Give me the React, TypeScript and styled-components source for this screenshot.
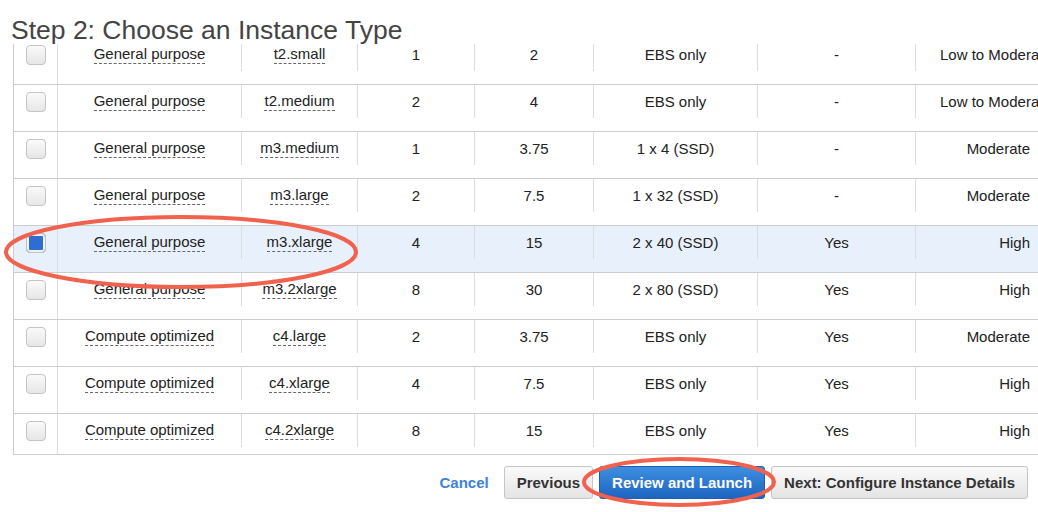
import React from "react";
import styled, { createGlobalStyle } from "styled-components";

const G = createGlobalStyle`
  body { margin:0; background:#fff; font-family:"Liberation Sans", Arial, sans-serif; }
`;
const Page = styled.div`position:relative;width:1038px;height:512px;overflow:hidden;`;
const Title = styled.h2`margin:0;height:44px;padding-left:11px;font-size:26.5px;font-weight:400;color:#444;line-height:60px;position:relative;z-index:1;`;
const TableWrap = styled.div`margin-left:13px;height:410px;overflow:hidden;border-bottom:1px solid #ccc;`;
const Table = styled.div`margin-top:-6px;width:1060px;`;
const Row = styled.div<{ sel?: boolean }>`
  display:grid;grid-template-columns:44px 184px 116px 117px 119px 164px 158px 158px;
  height:46px;border-bottom:1px solid #ccc;border-left:1px solid #ccc;background:${p => p.sel ? "#e8f0fb" : "#fff"};
`;
const Cell = styled.div<{ a?: string }>`
  display:flex;align-items:center;justify-content:${p => p.a || "center"};border-right:1px solid #ddd;
  font-size:15px;color:#222;padding:0 10px;white-space:nowrap;overflow:hidden;
`;
const Dash = styled.span`border-bottom:1px dashed #666;line-height:18px;`;
const Box = styled.span<{ on?: boolean }>`
  width:18px;height:18px;border-radius:4px;border:1px solid #c4c4c4;
  background:${p => p.on ? "#2c6fcf" : "linear-gradient(#fafafa,#e6e6e6)"};
  box-shadow:${p => p.on ? "inset 0 0 0 2px #f0f0f0" : "none"};
`;
const Footer = styled.div`display:flex;align-items:center;justify-content:flex-end;gap:6px;padding:11px 10px 0 0;`;
const Cancel = styled.span`color:#3b82d8;font-weight:700;font-size:15px;margin-right:9px;`;
const Btn = styled.button<{ primary?: boolean }>`
  height:33px;padding:0 12px;border-radius:3px;font:700 15px "Liberation Sans", Arial, sans-serif;
  border:1px solid ${p => p.primary ? "#1d5fb0" : "#c6c6c6"};
  color:${p => p.primary ? "#fff" : "#333"};
  background:${p => p.primary ? "linear-gradient(#3d8ee0,#1e65c0)" : "linear-gradient(#fafafa,#e4e4e4)"};
`;
const Overlay = styled.svg`position:absolute;left:0;top:0;pointer-events:none;`;

const rows = [
  ["General purpose","t2.small","1","2","EBS only","-","Low to Moderate"],
  ["General purpose","t2.medium","2","4","EBS only","-","Low to Moderate"],
  ["General purpose","m3.medium","1","3.75","1 x 4 (SSD)","-","Moderate"],
  ["General purpose","m3.large","2","7.5","1 x 32 (SSD)","-","Moderate"],
  ["General purpose","m3.xlarge","4","15","2 x 40 (SSD)","Yes","High"],
  ["General purpose","m3.2xlarge","8","30","2 x 80 (SSD)","Yes","High"],
  ["Compute optimized","c4.large","2","3.75","EBS only","Yes","Moderate"],
  ["Compute optimized","c4.xlarge","4","7.5","EBS only","Yes","High"],
  ["Compute optimized","c4.2xlarge","8","15","EBS only","Yes","High"],
];

export default function App() {
  return (
    <Page>
      <G />
      <Title>Step 2: Choose an Instance Type</Title>
      <TableWrap>
        <Table>
          {rows.map((r, i) => (
            <Row key={i} sel={i === 4}>
              <Cell><Box on={i === 4} /></Cell>
              <Cell><Dash>{r[0]}</Dash></Cell>
              <Cell><Dash>{r[1]}</Dash></Cell>
              <Cell>{r[2]}</Cell>
              <Cell>{r[3]}</Cell>
              <Cell>{r[4]}</Cell>
              <Cell>{r[5]}</Cell>
              <Cell a={i > 1 ? "flex-end" : "flex-start"} style={{ paddingRight: i > 1 ? 43 : 10, paddingLeft: 24 }}>{r[6]}</Cell>
              <Cell />
            </Row>
          ))}
        </Table>
      </TableWrap>
      <Footer>
        <Cancel>Cancel</Cancel>
        <Btn>Previous</Btn>
        <Btn primary>Review and Launch</Btn>
        <Btn>Next: Configure Instance Details</Btn>
      </Footer>
      <Overlay width="1038" height="512">
        <ellipse cx="181" cy="252" rx="175" ry="35" fill="none" stroke="#f0624d" strokeWidth="4" />
        <ellipse cx="679" cy="482" rx="95" ry="23" fill="none" stroke="#f0624d" strokeWidth="4" />
      </Overlay>
    </Page>
  );
}
